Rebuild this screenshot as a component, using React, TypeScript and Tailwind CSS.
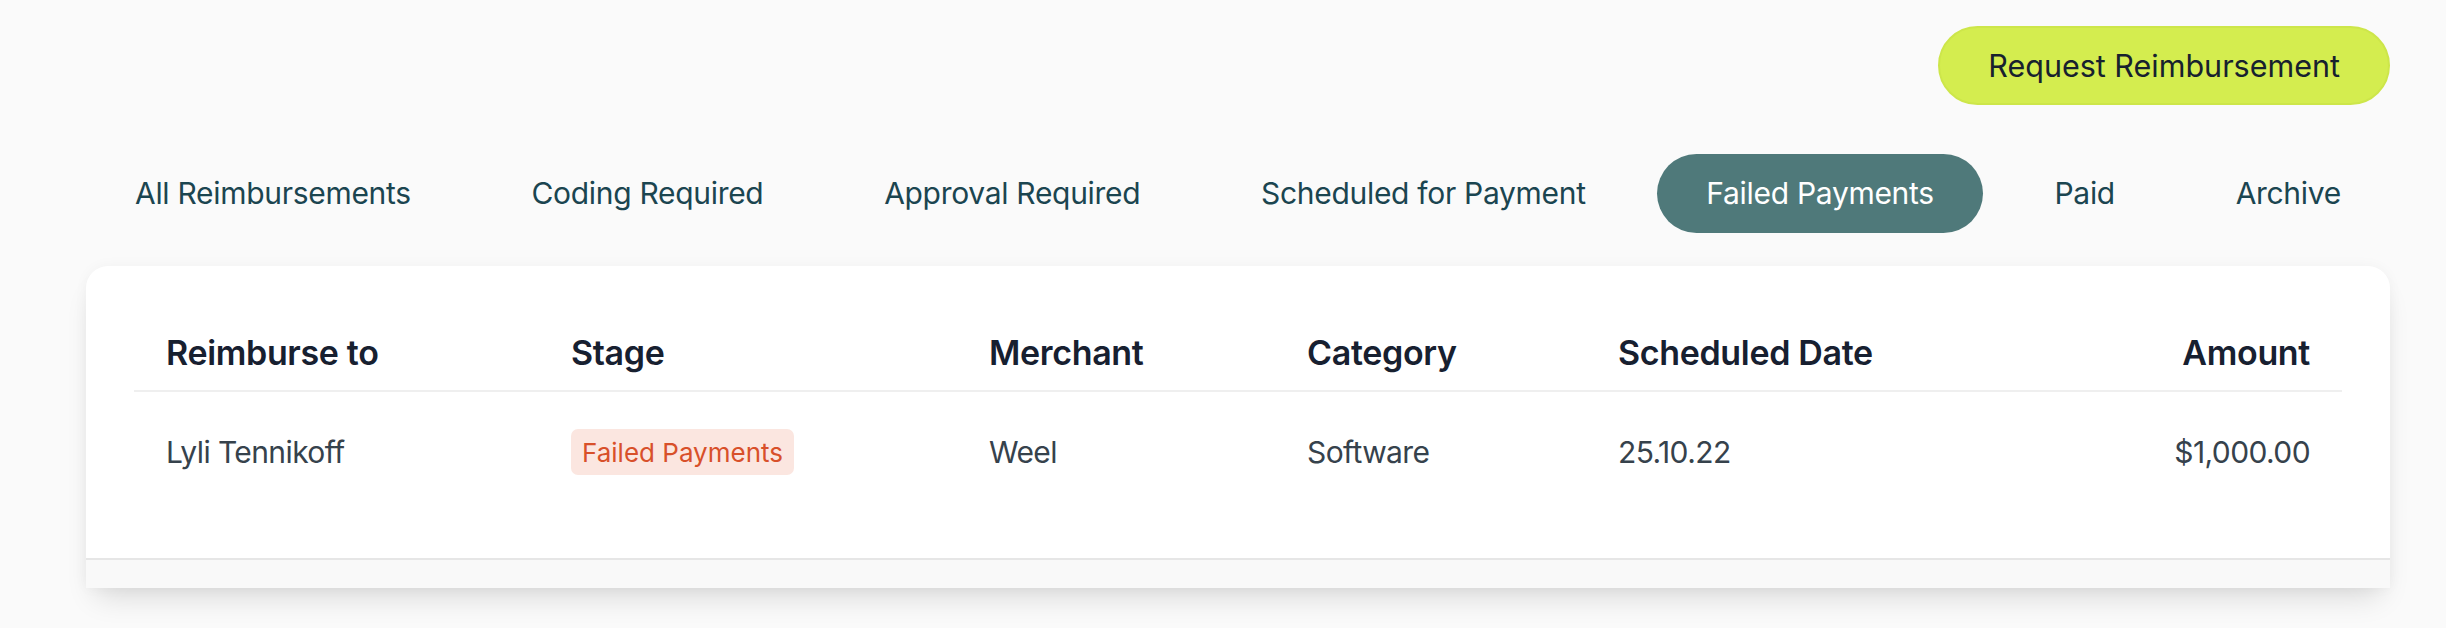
import React from "react";

const tabs = [
  "All Reimbursements",
  "Coding Required",
  "Approval Required",
  "Scheduled for Payment",
  "Failed Payments",
  "Paid",
  "Archive",
];

const rows = [
  {
    name: "Lyli Tennikoff",
    stage: "Failed Payments",
    merchant: "Weel",
    category: "Software",
    date: "25.10.22",
    amount: "$1,000.00",
  },
];

export default function App() {
  const active = "Failed Payments";

  return (
    <div className="min-h-[628px] w-full bg-[#fafafa] pl-[86px] pr-[56px] pt-[26px] font-['Inter',sans-serif]">
      <div className="flex justify-end">
        <button className="h-[79px] rounded-full border-2 border-[#cde64a] bg-[#d4ed4f] px-[48px] text-[30.5px] text-[#17212e]">
          Request Reimbursement
        </button>
      </div>

      {/* status tabs */}
      <div className="mt-[49px] flex items-center justify-between">
        {tabs.map((t) => (
          <button
            key={t}
            className={
              t === active
                ? "flex h-[79px] items-center rounded-full bg-[#4f797a] px-[49px] text-[30px] tracking-[-0.01em] text-white"
                : "flex h-[79px] items-center rounded-full px-[49px] text-[30px] tracking-[-0.01em] text-[#1b4550]"
            }>
            {t}
          </button>
        ))}
      </div>

      <div className="mt-[33px] overflow-hidden rounded-t-[22px] bg-white shadow-[0_18px_30px_-10px_rgba(0,0,0,0.14),0_0_14px_rgba(0,0,0,0.04)]">
        <div className="px-12 pt-12 pb-[46px]">
          <div className="grid h-[78px] grid-cols-[405px_418px_318px_311px_1fr_auto] items-center border-b-2 border-[#efefef] text-[34px] font-semibold tracking-[-0.01em] text-[#172030]">
            <div className="px-8">Reimburse to</div>
            <div className="px-8">Stage</div>
            <div className="px-8">Merchant</div>
            <div className="px-8">Category</div>
            <div className="px-8">Scheduled Date</div>
            <div className="px-8 text-right">Amount</div>
          </div>
          {rows.map((r) => (
            <div
              key={r.name}
              className="grid h-[120px] grid-cols-[405px_418px_318px_311px_1fr_auto] items-center text-[30px] tracking-[-0.02em] text-[#36424c]">
              <div className="px-8">{r.name}</div>
              <div className="px-8">
                <span className="inline-flex h-[46px] items-center rounded-[7px] bg-[#fbe6e0] px-[11px] text-[26px] tracking-normal text-[#d8502a]">
                  {r.stage}
                </span>
              </div>
              <div className="px-8">{r.merchant}</div>
              <div className="px-8">{r.category}</div>
              <div className="px-8">{r.date}</div>
              <div className="px-8 text-right">{r.amount}</div>
            </div>
          ))}
        </div>
        <div className="h-[30px] border-t-2 border-[#e6e6e6] bg-[#f9f9f9]" />
      </div>
    </div>
  );
}
